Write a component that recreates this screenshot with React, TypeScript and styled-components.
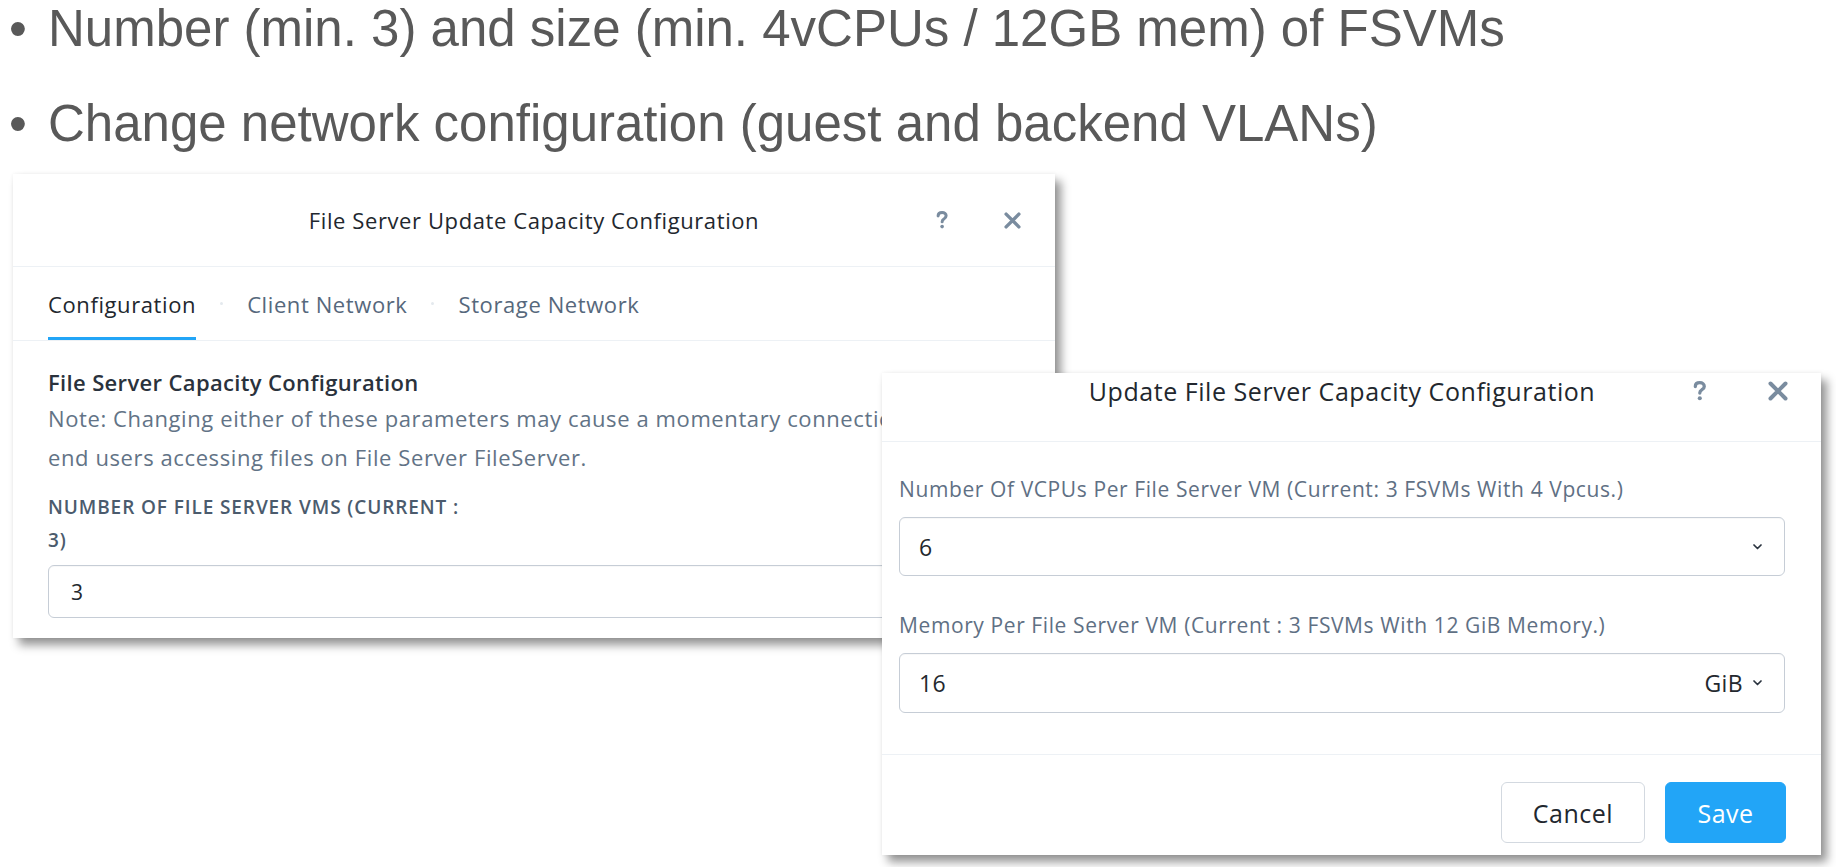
import React from "react";
import styled, { createGlobalStyle } from "styled-components";

const GlobalStyle = createGlobalStyle`
  body {
    margin: 0;
    background: #ffffff;
  }
`;

const Page = styled.div`
  width: 1836px;
  height: 867px;
  overflow: hidden;
`;

const Bullets = styled.ul`
  list-style: none;
  margin: 0;
  padding: 0;
  display: flex;
  flex-direction: column;
  gap: 38px;
  font-family: "Liberation Sans", Arial, sans-serif;
  font-size: 51px;
  line-height: 57px;
  color: #595959;
`;

const BulletItem = styled.li`
  display: flex;
  padding-left: 9px;
`;

const BulletDot = styled.span`
  width: 39px;
  flex: none;
`;

const Stage = styled.div`
  position: relative;
  margin-top: 22px;
  padding-left: 13px;
  font-family: "Open Sans", Lato, sans-serif;
`;

const Dialog = styled.div<{ $w: number }>`
  width: ${(p) => p.$w}px;
  background: #ffffff;
  display: flex;
  flex-direction: column;
  overflow: hidden;
  box-shadow: 6px 7px 9px rgba(0, 0, 0, 0.42), 0 0 4px rgba(0, 0, 0, 0.06);
`;

const UpdateDialog = styled(Dialog)`
  position: absolute;
  left: 882px;
  top: 199px;
`;

const Header = styled.div<{ $h: number; $pl: number; $pr: number; $pt?: number }>`
  height: ${(p) => p.$h}px;
  box-sizing: border-box;
  padding: ${(p) => p.$pt ?? 0}px ${(p) => p.$pr}px 0 ${(p) => p.$pl}px;
  display: grid;
  grid-template-columns: 1fr auto 1fr;
  align-items: ${(p) => (p.$pt !== undefined ? "start" : "center")};
  border-bottom: 1px solid #edf1f5;
`;

const Title = styled.div<{ $size: number; $ls: number }>`
  grid-column: 2;
  font-size: ${(p) => p.$size}px;
  letter-spacing: ${(p) => p.$ls}px;
  line-height: 30px;
  color: #22272e;
  white-space: nowrap;
`;

const HeaderIcons = styled.div<{ $gap: number }>`
  grid-column: 3;
  justify-self: end;
  display: flex;
  align-items: center;
  gap: ${(p) => p.$gap}px;
  height: 30px;
`;

const TabBar = styled.div`
  height: 73px;
  display: flex;
  padding-left: 35px;
  border-bottom: 1px solid #edf1f5;
`;

const Tab = styled.div<{ $active?: boolean }>`
  display: flex;
  align-items: center;
  box-sizing: border-box;
  padding-top: 3px;
  border-bottom: 3px solid ${(p) => (p.$active ? "#22a5f7" : "transparent")};
  font-size: 22px;
  letter-spacing: 0.6px;
  color: ${(p) => (p.$active ? "#22272e" : "#56687c")};
`;

const TabDot = styled.span`
  width: 3px;
  height: 3px;
  border-radius: 50%;
  background: #e4e9ee;
  align-self: center;
  margin: 0 24px;
`;

const Body = styled.div<{ $pad: string }>`
  padding: ${(p) => p.$pad};
  display: flex;
  flex-direction: column;
`;

const SectionTitle = styled.div`
  font-size: 22px;
  letter-spacing: 0.35px;
  line-height: 30px;
  font-weight: 600;
  color: #2a323c;
`;

const Note = styled.div`
  margin-top: 2px;
  font-size: 22px;
  letter-spacing: 0.6px;
  line-height: 39px;
  color: #627386;
  white-space: nowrap;
`;

const CapsLabel = styled.div`
  margin-top: 14px;
  font-size: 19px;
  letter-spacing: 0.9px;
  line-height: 33px;
  font-weight: 600;
  color: #4b5b6d;
  text-transform: uppercase;
  white-space: nowrap;
`;

const FieldLabel = styled.div<{ $mt: number }>`
  margin-top: ${(p) => p.$mt}px;
  font-size: 21px;
  letter-spacing: 0.6px;
  line-height: 28px;
  color: #5f7084;
  white-space: nowrap;
`;

const Field = styled.div<{ $h: number; $size: number; $mt: number; $pl: number }>`
  margin-top: ${(p) => p.$mt}px;
  height: ${(p) => p.$h}px;
  box-sizing: border-box;
  border: 1px solid #c6cdd6;
  border-radius: 6px;
  padding: 0 22px 0 ${(p) => p.$pl}px;
  display: flex;
  align-items: center;
  justify-content: space-between;
  font-size: ${(p) => p.$size}px;
  letter-spacing: 0.4px;
  color: #23282e;
  box-shadow: inset 0 1px 1px rgba(0, 0, 0, 0.03);
`;

const Unit = styled.span`
  display: flex;
  align-items: center;
  gap: 10px;
`;

const Footer = styled.div`
  border-top: 1px solid #edf1f5;
  padding: 27px 35px 12px;
  display: flex;
  justify-content: flex-end;
  gap: 20px;
`;

const Button = styled.button<{ $primary?: boolean }>`
  height: 61px;
  width: ${(p) => (p.$primary ? 121 : 144)}px;
  padding: 0;
  border-radius: 6px;
  border: 1px solid ${(p) => (p.$primary ? "#22a5f7" : "#d3d9e0")};
  background: ${(p) => (p.$primary ? "#22a5f7" : "#ffffff")};
  color: ${(p) => (p.$primary ? "#ffffff" : "#22272e")};
  font-family: inherit;
  font-size: 25px;
  letter-spacing: 0.5px;
`;

const iconColor = "#7a8c9f";

function HelpIcon({ h }: { h: number }) {
  return (
    <svg width={h * 0.68} height={h} viewBox="0 0 14 20.5" fill="none">
      <path
        d="M2.4 5.6C2.4 3.1 4.4 1.7 7 1.7c2.7 0 4.6 1.5 4.6 3.8 0 2-1.4 2.8-2.6 3.6-1.3.8-2 1.5-2 3.3"
        stroke={iconColor}
        strokeWidth="3.4"
        strokeLinecap="round"
      />
      <circle cx="7" cy="17.8" r="2.1" fill={iconColor} />
    </svg>
  );
}

function CloseIcon({ s }: { s: number }) {
  return (
    <svg width={s} height={s} viewBox="0 0 16 16" fill="none">
      <path d="M2 2L14 14M14 2L2 14" stroke={iconColor} strokeWidth="3.2" strokeLinecap="round" />
    </svg>
  );
}

function Chevron() {
  return (
    <svg width="9" height="6" viewBox="0 0 9 6" fill="none">
      <path d="M1 1l3.5 3.5L8 1" stroke="#2b3440" strokeWidth="1.7" strokeLinecap="round" strokeLinejoin="round" />
    </svg>
  );
}

export default function App() {
  return (
    <Page>
      <GlobalStyle />
      <Bullets>
        <BulletItem>
          <BulletDot>•</BulletDot>
          <span>Number (min. 3) and size (min. 4vCPUs / 12GB mem) of FSVMs</span>
        </BulletItem>
        <BulletItem>
          <BulletDot>•</BulletDot>
          <span>Change network configuration (guest and backend VLANs)</span>
        </BulletItem>
      </Bullets>

      <Stage>
        <Dialog $w={1042}>
          <Header $h={93} $pl={34} $pr={34}>
            <Title $size={22} $ls={0.6}>
              File Server Update Capacity Configuration
            </Title>
            <HeaderIcons $gap={56}>
              <HelpIcon h={18} />
              <CloseIcon s={17} />
            </HeaderIcons>
          </Header>
          <TabBar>
            <Tab $active>Configuration</Tab>
            <TabDot />
            <Tab>Client Network</Tab>
            <TabDot />
            <Tab>Storage Network</Tab>
          </TabBar>
          <Body $pad="26px 35px 20px">
            <SectionTitle>File Server Capacity Configuration</SectionTitle>
            <Note>
              Note: Changing either of these parameters may cause a momentary connection loss for
              <br />
              end users accessing files on File Server FileServer.
            </Note>
            <CapsLabel>
              Number of File Server VMs (Current :
              <br />
              3)
            </CapsLabel>
            <Field $h={53} $size={21} $mt={8} $pl={22}>
              3
            </Field>
          </Body>
        </Dialog>

        <UpdateDialog $w={939}>
          <Header $h={69} $pl={14} $pr={33} $pt={3}>
            <Title $size={25} $ls={0.55}>
              Update File Server Capacity Configuration
            </Title>
            <HeaderIcons $gap={61}>
              <HelpIcon h={20} />
              <CloseIcon s={20} />
            </HeaderIcons>
          </Header>
          <Body $pad="33px 36px 41px 17px">
            <FieldLabel $mt={0}>Number Of VCPUs Per File Server VM (Current: 3 FSVMs With 4 Vpcus.)</FieldLabel>
            <Field $h={59} $size={23} $mt={14} $pl={19}>
              <span>6</span>
              <Chevron />
            </Field>
            <FieldLabel $mt={35}>Memory Per File Server VM (Current : 3 FSVMs With 12 GiB Memory.)</FieldLabel>
            <Field $h={60} $size={23} $mt={14} $pl={19}>
              <span>16</span>
              <Unit>
                GiB
                <Chevron />
              </Unit>
            </Field>
          </Body>
          <Footer>
            <Button>Cancel</Button>
            <Button $primary>Save</Button>
          </Footer>
        </UpdateDialog>
      </Stage>
    </Page>
  );
}
